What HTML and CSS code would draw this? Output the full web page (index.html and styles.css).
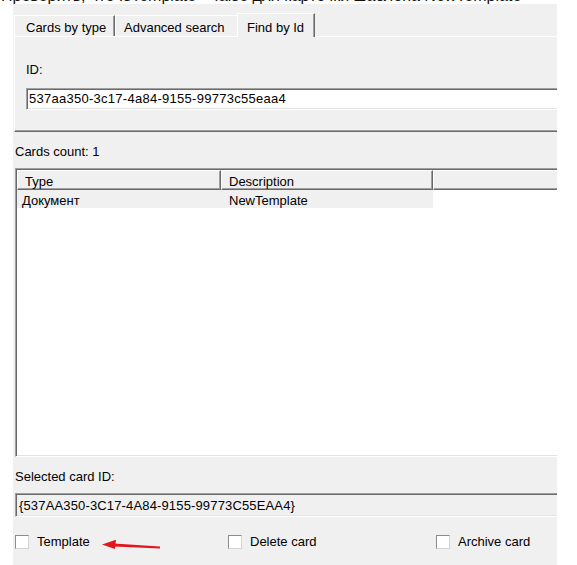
FILE: index.html
```html
<!DOCTYPE html>
<html lang="ru">
<head>
<meta charset="utf-8">
<title>Find by Id</title>
<link rel="stylesheet" href="styles.css">
</head>
<body>
<div class="caption"><span>Проверить, что IsTemplate = false для карточки шаблона NewTemplate</span></div>
<div class="window">
  <div class="tabs">
    <div class="tab t1">Cards by type</div>
    <div class="tab t2">Advanced search</div>
    <div class="tab t3 active">Find by Id</div>
  </div>
  <div class="tabpage">
    <div class="label">ID:</div>
    <div class="textbox">537aa350-3c17-4a84-9155-99773c55eaa4</div>
  </div>
  <div class="label count">Cards count: 1</div>
  <div class="list">
    <div class="list-head">
      <div class="hcell c1">Type</div>
      <div class="hcell c2">Description</div>
      <div class="hcell c3"></div>
    </div>
    <div class="row selected">
      <div class="cell c1">Документ</div>
      <div class="cell c2">NewTemplate</div>
    </div>
  </div>
  <div class="label sel">Selected card ID:</div>
  <div class="textbox readonly">{537AA350-3C17-4A84-9155-99773C55EAA4}</div>
  <div class="checks">
    <div class="check k1"><span class="box"></span><span>Template</span></div>
    <div class="check k2"><span class="box"></span><span>Delete card</span></div>
    <div class="check k3"><span class="box"></span><span>Archive card</span></div>
  </div>
  <svg class="arrow" width="64" height="16" viewBox="0 0 64 16">
    <polygon points="3,7.5 17,2.8 16,12" fill="#e4161d"/>
    <polygon points="15,6.4 61,9.4 61,11.4 15,9.6" fill="#e4161d"/>
  </svg>
</div>
</body>
</html>
```
FILE: styles.css
```css
body {
  margin: 0;
  background: #ffffff;
  font-family: "Liberation Sans", Arial, sans-serif;
  font-size: 13px;
  color: #000000;
}

.caption {
  height: 4px;
  overflow: hidden;
  font-size: 16px;
  line-height: 18px;
  white-space: nowrap;
  color: #111;
}

.caption span {
  display: block;
  margin-top: -13px;
  padding-left: 1px;
}

.window {
  position: relative;
  margin-left: 13px;
  width: 544px;
  height: 561px;
  background: #f0f0f0;
  overflow: hidden;
}

/* ---- tabs ---- */
.tabs {
  position: relative;
  z-index: 1;
  display: flex;
  align-items: flex-end;
  height: 32px;
  padding-left: 1px;
}

.tab {
  flex-shrink: 0;
  box-sizing: border-box;
  height: 21px;
  padding-top: 4px;
  line-height: 15px;
  white-space: nowrap;
  border-top: 1px solid #ffffff;
  border-left: 1px solid #ffffff;
  background: #f0f0f0;
}

.t1 {
  width: 101px;
  padding-left: 11px;
  border-right: 1px solid #696969;
  box-shadow: inset -1px 0 0 #a0a0a0;
}

.t2 {
  width: 122px;
  padding-left: 8px;
}

.t3.active {
  width: 78px;
  height: 24px;
  margin-bottom: -1px;
  padding-top: 6px;
  padding-left: 9px;
  border-right: 1px solid #696969;
  box-shadow: inset -1px 0 0 #a0a0a0;
}

.tabpage {
  box-sizing: border-box;
  width: 700px;
  height: 96px;
  margin-left: 1px;
  padding: 25px 0 0 11px;
  border-top: 1px solid #ffffff;
  border-left: 1px solid #ffffff;
  border-bottom: 1px solid #696969;
  box-shadow: inset 0 -1px 0 #a0a0a0;
}

.label {
  line-height: 15px;
  white-space: nowrap;
}

.textbox {
  box-sizing: border-box;
  width: 800px;
  height: 22px;
  margin-top: 11px;
  padding: 2px 0 0 2px;
  line-height: 15px;
  letter-spacing: 0.27px;
  background: #ffffff;
  border: 1px solid;
  border-color: #a0a0a0 #ffffff #ffffff #a0a0a0;
  box-shadow: inset 1px 1px 0 #696969, inset -1px -1px 0 #e3e3e3;
  white-space: nowrap;
}

.count {
  margin: 12px 0 0 2px;
}

/* ---- list ---- */
.list {
  box-sizing: border-box;
  width: 900px;
  height: 289px;
  margin: 9px 0 0 2px;
  padding: 1px 0 0 1px;
  background: #ffffff;
  border: 1px solid;
  border-color: #a0a0a0 #ffffff #ffffff #a0a0a0;
  box-shadow: inset 1px 1px 0 #696969, inset -1px -1px 0 #e3e3e3;
}

.list-head {
  display: flex;
  height: 20px;
  background: #f0f0f0;
}

.hcell {
  flex-shrink: 0;
  box-sizing: border-box;
  height: 20px;
  padding: 3px 0 0 7px;
  line-height: 15px;
  border-top: 1px solid #ffffff;
  border-left: 1px solid #ffffff;
  border-right: 1px solid #696969;
  border-bottom: 1px solid #696969;
  box-shadow: inset -1px -1px 0 #a0a0a0;
  white-space: nowrap;
}

.hcell.c1 { width: 204px; }
.hcell.c2 { width: 212px; }
.hcell.c3 { width: 400px; }

.row {
  display: flex;
  width: 416px;
  height: 18px;
}

.row.selected {
  background: #f0f0f0;
}

.cell {
  flex-shrink: 0;
  box-sizing: border-box;
  height: 18px;
  padding-top: 3px;
  line-height: 15px;
  white-space: nowrap;
}

.cell.c1 { width: 204px; padding-left: 5px; }
.cell.c2 { width: 212px; padding-left: 8px; }

.sel {
  margin: 12px 0 0 2px;
}

.textbox.readonly {
  height: 24px;
  margin: 9px 0 0 2px;
  padding: 4px 0 0 3px;
  letter-spacing: 0.15px;
  background: #f0f0f0;
}

/* ---- checkboxes ---- */
.checks {
  display: flex;
  margin: 17px 0 0 2px;
}

.check {
  flex-shrink: 0;
  display: flex;
  align-items: center;
  gap: 8px;
  height: 15px;
  line-height: 15px;
  white-space: nowrap;
}

.k1 { width: 213px; }
.k2 { width: 208px; }

.box {
  box-sizing: border-box;
  width: 14px;
  height: 14px;
  background: #ffffff;
  border: 1px solid;
  border-color: #8c8c8c #d4d4d4 #d4d4d4 #8c8c8c;
}

.arrow {
  position: absolute;
  left: 86px;
  top: 533px;
}
```
